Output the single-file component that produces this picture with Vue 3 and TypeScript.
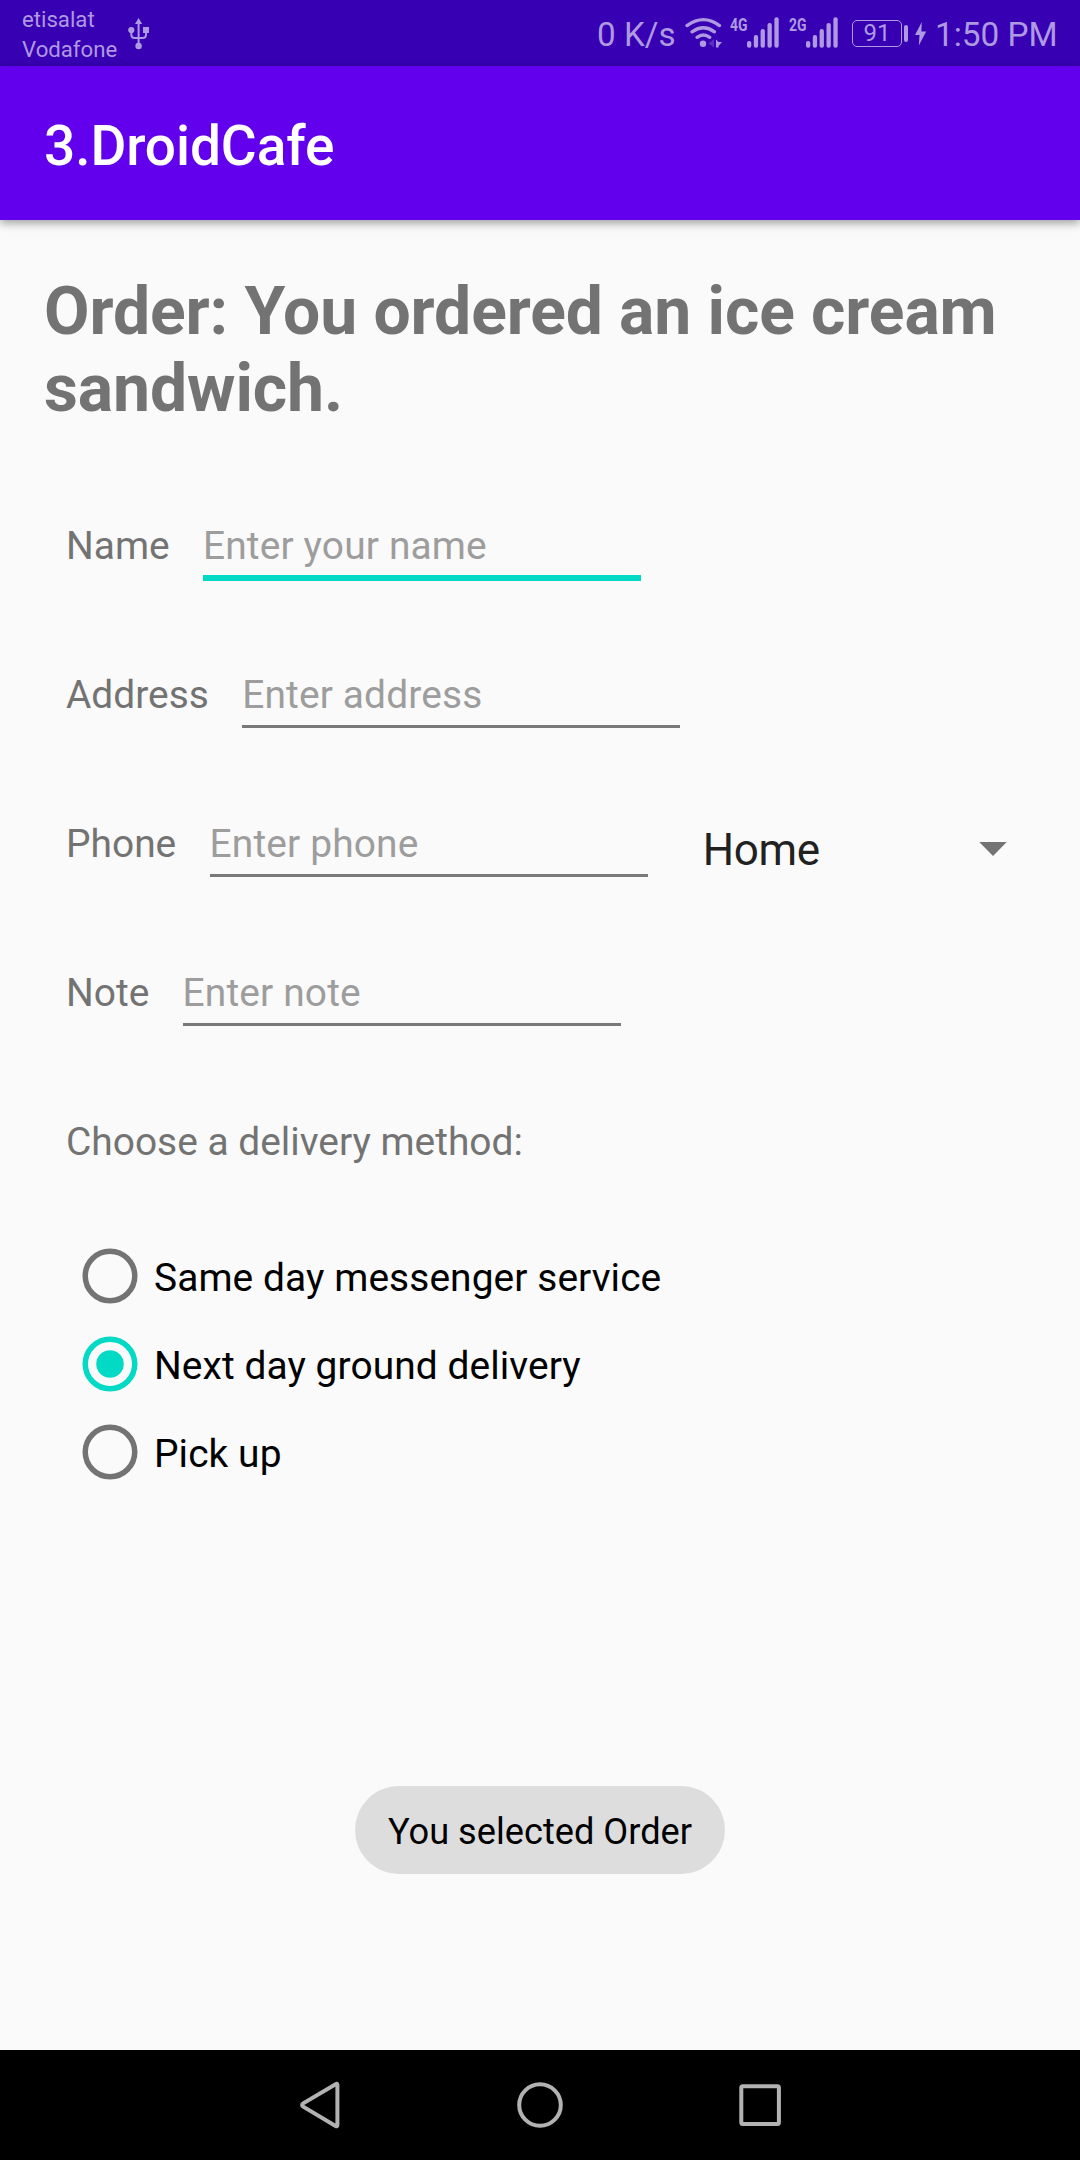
<script setup lang="ts">
import { ref } from 'vue'

interface Field {
  id: string
  label: string
  hint: string
}

const fields: Field[] = [
  { id: 'name', label: 'Name', hint: 'Enter your name' },
  { id: 'address', label: 'Address', hint: 'Enter address' },
  { id: 'phone', label: 'Phone', hint: 'Enter phone' },
  { id: 'note', label: 'Note', hint: 'Enter note' },
]

const methods: string[] = ['Same day messenger service', 'Next day ground delivery', 'Pick up']

const networks: string[] = ['4G', '2G']
const focused = ref('name')
const selected = ref(1)
</script>

<template>
  <div class="screen">
    <header class="status">
      <div class="carriers">
        <span>etisalat</span>
        <span>Vodafone</span>
      </div>
      <svg class="usb" width="22" height="66" viewBox="0 0 22 66">
        <path d="M7 24 L10.6 18 L14.2 24Z" />
        <circle cx="3.3" cy="30" r="3.1" />
        <rect x="15" y="27" width="6" height="6" />
        <circle cx="10.6" cy="46" r="3.2" />
        <path class="line" d="M10.6 22V45 M3.3 31V34.5Q3.3 38 6.8 38H14.5Q18 38 18 34.5V31" />
      </svg>

      <span class="speed">0 K/s</span>
      <svg class="wifi" width="38" height="66" viewBox="685 0 38 66">
        <path class="arc" d="M687 25.6Q703.5 13.6 719.5 25.6" />
        <path class="arc" d="M692 31.8Q703.5 23.8 714.5 31.8" />
        <path class="arc" d="M697 37.3Q703.3 32.8 709.8 37.3" />
        <circle cx="703" cy="43.8" r="3.2" />
        <path opacity="0.3" d="M714 39V47.5L708.5 43.5Z" />
        <path d="M716 39.5L718.5 42H722L718.5 46V47.5H716Z" />
      </svg>
      <svg v-for="n in networks" :key="n" class="signal" width="50" height="66" viewBox="730 0 50 66">
        <text x="730" y="31" textLength="17.5" lengthAdjust="spacingAndGlyphs">{{ n }}</text>
        <rect x="747" y="41" width="4.3" height="6.8" rx="2" />
        <rect x="753.8" y="35" width="4.3" height="12.8" rx="2" />
        <rect x="760.6" y="29" width="4.3" height="18.8" rx="2" />
        <rect x="767.5" y="23" width="4.3" height="24.8" rx="2" />
        <rect x="774.4" y="17.2" width="4.3" height="30.6" rx="2" />
      </svg>
      <div class="battery"><span>91</span></div>
      <i class="battery-cap"></i>
      <svg class="bolt" width="12" height="66" viewBox="915 0 12 66">
        <path d="M921.8 22L915 35H919.5L918.8 45.5L926.2 31.5H921.4Z" />
      </svg>
      <span class="clock">1:50 PM</span>
    </header>

    <div class="app-bar">3.DroidCafe</div>

    <main class="content">
      <h1>Order: You ordered an ice cream sandwich.</h1>

      <div v-for="f in fields" :key="f.id" class="row">
        <label>{{ f.label }}</label>
        <div class="input" :class="{ focus: f.id === focused }">
          <span>{{ f.hint }}</span>
          <i></i>
        </div>
        <div v-if="f.id === 'phone'" class="spinner">
          <span>Home</span>
          <svg width="28" height="14" viewBox="0 0 28 14"><path d="M0.25 0.1H27.75L14 13.9Z" /></svg>
        </div>
      </div>

      <p class="prompt">Choose a delivery method:</p>

      <div class="radios">
        <div v-for="(m, i) in methods" :key="m" class="radio" :class="{ on: i === selected }" @click="selected = i">
          <svg width="56" height="56" viewBox="0 0 56 56">
            <circle class="ring" cx="28" cy="28" r="24.75" />
            <circle v-if="i === selected" class="dot" cx="28" cy="28" r="13.75" />
          </svg>
          <span>{{ m }}</span>
        </div>
      </div>
    </main>

    <div class="toast">You selected Order</div>

    <nav class="nav">
      <svg width="44" height="50" viewBox="298 2080 44 50">
        <path d="M335.6 2084.2Q337.4 2083.2 337.4 2085V2125Q337.4 2127 335.6 2126L303.2 2106.6Q301 2105 303.2 2103.4Z" />
      </svg>
      <svg width="50" height="50" viewBox="515 2080 50 50">
        <circle cx="540" cy="2105" r="20.8" />
      </svg>
      <svg width="44" height="50" viewBox="738 2080 44 50">
        <rect x="741.3" y="2086.3" width="37.6" height="37.6" rx="1.5" />
      </svg>
    </nav>
  </div>
</template>

<style>
body {
  margin: 0;
}
</style>

<style scoped>
.screen {
  position: relative;
  display: flex;
  flex-direction: column;
  width: 1080px;
  height: 2160px;
  overflow: hidden;
  background: #fafafa;
  font-family: Roboto, "Liberation Sans", sans-serif;
  font-size: 38.9px;
  color: #737373;
}

svg {
  display: block;
  flex: none;
}

/* status bar */
.status {
  display: flex;
  align-items: center;
  box-sizing: border-box;
  height: 66px;
  padding-left: 22px;
  background: #3700b3;
  color: #af99e1;
  fill: #af99e1;
  white-space: nowrap;
}

.carriers {
  display: flex;
  flex-direction: column;
  width: 106px;
  padding-top: 2px;
  font-size: 22.2px;
  line-height: 30px;
}

.usb .line {
  fill: none;
  stroke: #af99e1;
  stroke-width: 2;
}

.speed {
  width: 88px;
  margin-left: 447px;
  font-size: 33.2px;
  line-height: 66px;
  padding-top: 3px;
}

.wifi {
  margin-right: 7px;
  margin-left: 0;
}

.wifi .arc {
  fill: none;
  stroke: #af99e1;
  stroke-width: 3.3;
  stroke-linecap: round;
}

.signal {
  margin-right: 9.3px;
}

.signal text {
  font: 700 18.5px Roboto, sans-serif;
}

.battery {
  box-sizing: border-box;
  flex: none;
  width: 50px;
  height: 27px;
  margin-left: 3.4px;
  border: 1.5px solid #af99e1;
  border-radius: 5px;
  font-size: 24px;
  line-height: 25px;
  text-align: center;
}

.battery-cap {
  width: 4px;
  height: 17px;
  margin: 0 7px 0 2px;
  border-radius: 2px;
  background: #af99e1;
}

.clock {
  margin-left: 8px;
  font-size: 33.3px;
  line-height: 66px;
  padding-top: 3px;
}

/* app bar */
.app-bar {
  position: relative;
  flex: none;
  height: 154px;
  padding-left: 44px;
  background: #6200ee;
  box-shadow: 0 3px 9px rgba(0, 0, 0, 0.38);
  color: #fff;
  font-size: 55px;
  font-weight: 500;
  letter-spacing: -0.08px;
  line-height: 160px;
}

/* form */
.content {
  padding: 0 44px;
}

h1 {
  margin: 53px 0 71px;
  font-size: 66px;
  font-weight: 700;
  letter-spacing: -0.09px;
  line-height: 77px;
}

.row {
  display: flex;
  align-items: flex-start;
  gap: 33.3px;
  height: 149px;
  padding-left: 22px;
  line-height: 46px;
}

.row label,
.input {
  margin-top: 25px;
}

.input {
  width: 438px;
  color: #9d9d9d;
  letter-spacing: 0.15px;
}

.input span {
  display: block;
}

.input i {
  display: block;
  height: 3px;
  margin-top: 7px;
  background: #797979;
}

.input.focus i {
  height: 5.5px;
  margin-top: 6px;
  background: #03dac5;
}

.spinner {
  display: flex;
  align-items: center;
  justify-content: space-between;
  width: 304px;
  height: 52px;
  margin: 28px 0 0 22px;
  color: #212121;
  font-size: 44px;
  letter-spacing: -0.4px;
}

.spinner svg {
  margin-top: -3px;
  fill: #737373;
}

.prompt {
  margin: 25px 0 67px;
  padding-left: 22px;
  line-height: 46px;
}

.radio {
  display: flex;
  align-items: center;
  gap: 16px;
  height: 88px;
  padding-left: 38px;
  color: #000;
}

.radio span {
  padding-top: 3px;
  letter-spacing: 0.08px;
}

.ring {
  fill: none;
  stroke: #737373;
  stroke-width: 5.5;
}

.on .ring {
  stroke: #03dac5;
}

.dot {
  fill: #03dac5;
}

/* transient message floating above the form */
.toast {
  position: absolute;
  top: 1786px;
  left: 355px;
  width: 370px;
  height: 88px;
  border-radius: 44px;
  background: #ddd;
  color: #000;
  font-size: 36.2px;
  line-height: 92px;
  text-align: center;
}

/* navigation bar */
.nav {
  display: flex;
  align-items: center;
  justify-content: center;
  gap: 173px;
  height: 110px;
  margin-top: auto;
  background: #000;
  fill: none;
  stroke: #b2b2b2;
  stroke-width: 4;
}
</style>
